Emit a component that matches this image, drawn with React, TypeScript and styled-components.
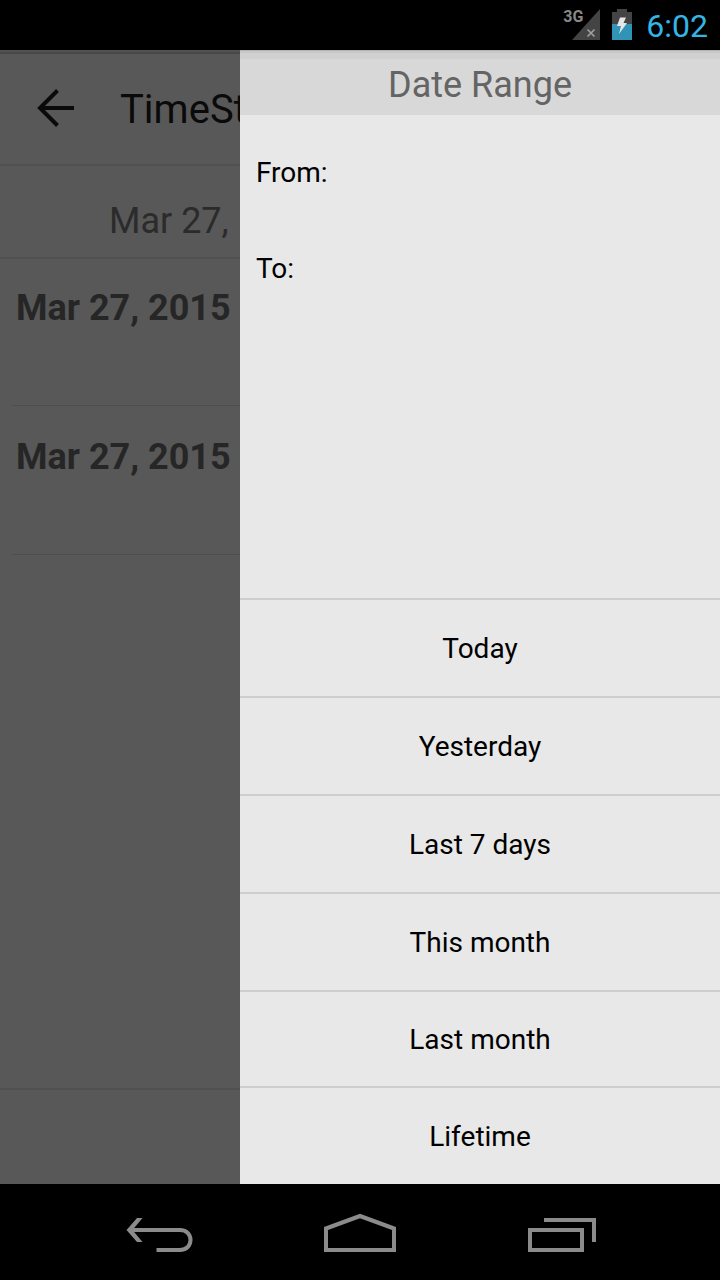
import React from "react";
import styled, { createGlobalStyle } from "styled-components";

const GlobalStyle = createGlobalStyle`
  *, *::before, *::after { box-sizing: border-box; }
  body { margin: 0; background: #000; font-family: Roboto, sans-serif; }
  button, input { font: inherit; color: inherit; border: 0; background: none; padding: 0; margin: 0; }
  h1, h2, ul { margin: 0; padding: 0; font-weight: 400; list-style: none; }
  svg { display: block; }
`;

const Screen = styled.div`
  display: flex;
  flex-direction: column;
  min-height: 100vh;
`;

const StatusBar = styled.header`
  display: flex;
  align-items: center;
  justify-content: flex-end;
  gap: 12px;
  height: 50px;
  padding-right: 12px;
  background: #000;
`;

const Clock = styled.time`
  margin-left: 2px;
  padding-top: 2px;
  color: #33b5e5;
  font-size: 32px;
  line-height: 48px;
`;

const Signal = styled.div`
  display: flex;
  align-items: flex-start;
`;

const NetworkType = styled.span`
  margin-right: -11px;
  color: #888;
  font-size: 16px;
  font-weight: 700;
  line-height: 16px;
`;

const Body = styled.div`
  display: flex;
  flex: 1;
`;

const Page = styled.main`
  display: flex;
  flex: 1;
  flex-direction: column;
  min-width: 0;
  overflow: hidden;
  background: #585858;
  white-space: nowrap;
`;

const ActionBar = styled.div`
  display: flex;
  align-items: flex-start;
  gap: 44px;
  height: 116px;
  padding: 38px 0 0 36px;
  border-bottom: 2px solid #505050;
  box-shadow: inset 0 2px #525050, inset 0 4px #484848;
`;

const BackButton = styled.button`
  flex: none;
`;

const PageTitle = styled.h1`
  color: #0a0a0a;
  font-size: 40px;
  line-height: 44px;
`;

const RangeSummary = styled.div`
  height: 91px;
  padding: 33px 0 0 109px;
  color: #2b2b2b;
  font-size: 36px;
  line-height: 44px;
`;

const Entries = styled.ul`
  flex: 1;
  box-shadow: inset 0 2px #505050;
`;

const Entry = styled.li`
  height: 149px;
  margin-left: 12px;
  padding: 29px 0 0 4px;
  border-bottom: 1px solid #4e4e4e;
  color: #262626;
  font-size: 36px;
  font-weight: 700;
  line-height: 44px;
`;

const PageFooter = styled.div`
  height: 96px;
  border-top: 2px solid #505050;
`;

const Drawer = styled.aside`
  display: flex;
  flex: none;
  flex-direction: column;
  width: 480px;
  max-width: 80%;
  background: #e8e8e8;
  color: #000;
  font-size: 28px;
`;

const DrawerTitle = styled.h2`
  height: 65px;
  padding-top: 5px;
  background: #d8d8d8;
  box-shadow: inset 0 1px #b4b4b4, inset 0 3px #c8c8c8, inset 0 9px #d0d0d0;
  color: #646464;
  font-size: 36px;
  line-height: 60px;
  text-align: center;
`;

const DateFields = styled.form`
  flex: 1;
  padding: 9px 16px;
`;

const Field = styled.label`
  display: flex;
  align-items: center;
  gap: 8px;
  height: 96px;
`;

const DateInput = styled.input`
  flex: 1;
  min-width: 0;
  outline: 0;
`;

const Preset = styled.button<{ $compact?: boolean }>`
  display: block;
  width: 100%;
  height: ${(p) => (p.$compact ? 96 : 98)}px;
  border-top: 2px solid #cecece;
  text-align: center;
`;

const NavBar = styled.nav`
  display: flex;
  align-items: center;
  justify-content: center;
  gap: 106px;
  height: 96px;
  background: #000;
`;

const NavButton = styled.button`
  flex: none;
`;

const presets = [
  { label: "Today" },
  { label: "Yesterday" },
  { label: "Last 7 days" },
  { label: "This month" },
  { label: "Last month", compact: true },
  { label: "Lifetime" },
];

const entries = ["Mar 27, 2015", "Mar 27, 2015"];

const stroke = { fill: "none", stroke: "#8b8b8b", strokeWidth: 4 };

export default function App() {
  return (
    <>
      <GlobalStyle />
      <Screen>
        <StatusBar>
          <Signal>
            <NetworkType>3G</NetworkType>
            <svg width="28" height="32" viewBox="0 0 28 32">
              <path d="M28 0V31H0Z" fill="#444" />
              <path d="M15.500 20.500L22.500 27.500M22.500 20.500L15.500 27.500" stroke="#a0a0a0" strokeWidth="1.6" />
            </svg>
          </Signal>
          <svg width="20" height="32" viewBox="0 0 20 32">
            <path d="M5 0H15V3H20V15H0V3H5Z" fill="#444" />
            <path d="M0 15H20V31H0Z" fill="#3193b6" />
            <path d="M8 8.500H14L11.500 14H15L7 25L9 17H5Z" fill="#e6e6e6" />
          </svg>
          <Clock>6:02</Clock>
        </StatusBar>
        <Body>
          <Page>
            <ActionBar>
              <BackButton aria-label="Back">
                <svg width="40" height="40" viewBox="0 0 40 40">
                  <path
                    d="M38 20H4M21.500 2.500L4 20L21.500 37.500"
                    fill="none"
                    stroke="#0a0a0a"
                    strokeWidth="4"
                  />
                </svg>
              </BackButton>
              <PageTitle>TimeSt</PageTitle>
            </ActionBar>
            <RangeSummary>Mar 27,</RangeSummary>
            <Entries>
              {entries.map((date, i) => (
                <Entry key={i}>{date}</Entry>
              ))}
            </Entries>
            <PageFooter />
          </Page>
          <Drawer>
            <DrawerTitle>Date Range</DrawerTitle>
            <DateFields>
              <Field>
                From:
                <DateInput name="from" />
              </Field>
              <Field>
                To:
                <DateInput name="to" />
              </Field>
            </DateFields>
            <ul>
              {presets.map((p) => (
                <li key={p.label}>
                  <Preset type="button" $compact={p.compact}>
                    {p.label}
                  </Preset>
                </li>
              ))}
            </ul>
          </Drawer>
        </Body>
        <NavBar>
          <NavButton aria-label="Back">
            <svg width="96" height="96" viewBox="0 0 96 96">
              <path d="M20 46H70C84 46 84 66 70 66H46.500" {...stroke} />
              <path d="M27 34H32.500L22.500 46L32.500 58H27L16.500 46Z" fill="#8b8b8b" />
            </svg>
          </NavButton>
          <NavButton aria-label="Home">
            <svg width="96" height="96" viewBox="0 0 96 96">
              <path d="M14 44.500L48 32L82 44.500V66H14Z" {...stroke} />
            </svg>
          </NavButton>
          <NavButton aria-label="Recent apps">
            <svg width="96" height="96" viewBox="0 0 96 96">
              <path d="M16 46H68V66H16ZM30 36H80V58" {...stroke} />
            </svg>
          </NavButton>
        </NavBar>
      </Screen>
    </>
  );
}
